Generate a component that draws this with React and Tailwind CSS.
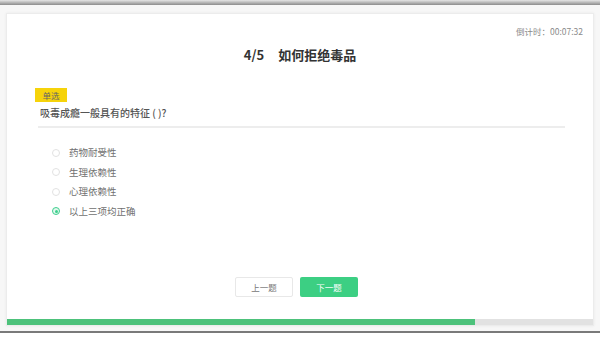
export default function App() {
  const options = ["药物耐受性", "生理依赖性", "心理依赖性", "以上三项均正确"];
  return (
    <div
      className="w-[600px] h-[337px] bg-white overflow-hidden flex flex-col"
      style={{ fontFamily: '"Noto Sans CJK SC", "Noto Sans", sans-serif' }}
    >
      <div className="h-[5px] bg-gradient-to-b from-[#e6e6e6] to-[#8c8c8c] shrink-0" />
      <div className="h-[8px] bg-[#f7f7f7] shrink-0" />
      <div className="flex-1 bg-[#f7f7f7] px-[6px] flex flex-col">
        <div className="h-[313px] bg-white border border-[#ececec] shadow-[0_0_3px_rgba(0,0,0,0.06)] flex flex-col">
          <div className="flex justify-end pr-[10px] pt-[12px] h-[28px]">
            <span className="text-[8.5px] leading-[10px] text-[#8a8a8a]">倒计时：00:07:32</span>
          </div>
          <div className="flex justify-center items-center h-[22px] mt-[2px] text-[13px] font-bold text-[#333]">
            <span>4/5</span>
            <span className="ml-[14px]">如何拒绝毒品</span>
          </div>
          <div className="pl-[28px] pr-[28px] mt-[22px] flex flex-col">
            <div className="flex items-center justify-center bg-[#f6d30a] h-[14px] w-[32px] text-[8.5px] leading-[14px] text-[#666]">单选</div>
            <div className="mt-[5px] ml-[5px] text-[10px] leading-[12px] font-medium text-[#555]">吸毒成瘾一般具有的特征 ( )?</div>
            <div className="mt-[7px] ml-[3px] h-[2px] bg-[#ededed]" />
          </div>
          <div className="pl-[45px] mt-[18px] flex flex-col gap-[6.5px]">
            {options.map((o, i) => (
              <div key={o} className="flex items-center h-[13px]">
                {i === 3 ? (
                  <span className="w-[8px] h-[8px] rounded-full border border-[#3ecf8e] bg-[#e3f8ee] flex items-center justify-center">
                    <span className="w-[3px] h-[3px] rounded-full bg-[#3ecf8e]" />
                  </span>
                ) : (
                  <span className="w-[8px] h-[8px] rounded-full border border-[#e2e2e2] bg-white" />
                )}
                <span className="ml-[9px] text-[9.5px] text-[#707070]">{o}</span>
              </div>
            ))}
          </div>
          <div className="flex-1" />
          <div className="flex justify-center gap-[7px] mr-[7px] mb-[22px]">
            <div className="w-[58px] h-[20px] border border-[#e8e8e8] bg-white flex items-center justify-center text-[8.5px] text-[#777] rounded-[2px]">上一题</div>
            <div className="w-[58px] h-[20px] bg-[#3ccf83] flex items-center justify-center text-[8.5px] text-white rounded-[2px]">下一题</div>
          </div>
          <div className="h-[6px] bg-[#e2e2e2] flex shrink-0">
            <div className="w-[468px] h-full bg-[#4dc27b]" />
          </div>
        </div>
        <div className="flex-1" />
      </div>
      <div className="h-[2px] bg-[#7a7a7a] shrink-0" />
      <div className="h-[4px] bg-white shrink-0" />
    </div>
  );
}
